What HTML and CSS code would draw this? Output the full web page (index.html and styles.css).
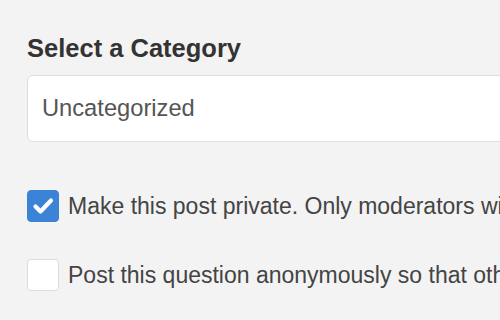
FILE: index.html
```html
<!DOCTYPE html>
<html>
<head>
<meta charset="utf-8">
<link rel="stylesheet" href="styles.css">
</head>
<body>
<div class="form">
  <h2 class="heading">Select a Category</h2>
  <div class="select">Uncategorized</div>
  <div class="options">
    <label class="option">
      <span class="box checked">
        <svg viewBox="0 0 32 32" width="32" height="32"><path d="M8.5 16.5 L13.5 21.5 L24 10.5" fill="none" stroke="#fff" stroke-width="4.2" stroke-linecap="round" stroke-linejoin="round"/></svg>
      </span>
      <span class="text">Make this post private. Only moderators will be able to see it.</span>
    </label>
    <label class="option">
      <span class="box"></span>
      <span class="text">Post this question anonymously so that other users can't see who asked.</span>
    </label>
  </div>
</div>
</body>
</html>
```
FILE: styles.css
```css
html, body {
  margin: 0;
  padding: 0;
  background: #f3f3f3;
  overflow: hidden;
}
body {
  width: 500px;
  height: 320px;
  font-family: "Liberation Sans", Arial, sans-serif;
}
.form {
  width: 700px;
  padding: 33px 0 0 27px;
}
.heading {
  margin: 0;
  font-size: 25.5px;
  line-height: 30px;
  font-weight: bold;
  color: #333;
}
.select {
  margin-top: 12px;
  height: 65px;
  box-sizing: content-box;
  border: 1px solid #dedede;
  border-radius: 6px;
  background: #fff;
  padding: 0 0 0 14px;
  display: flex;
  align-items: center;
  font-size: 23.7px;
  color: #555;
}
.options {
  margin-top: 48px;
  display: flex;
  flex-direction: column;
  gap: 37px;
}
.option {
  display: flex;
  align-items: center;
  gap: 9px;
  white-space: nowrap;
}
.box {
  width: 32px;
  height: 32px;
  box-sizing: border-box;
  border: 1px solid #dcdcdc;
  border-radius: 4px;
  background: #fff;
  flex: none;
  display: flex;
}
.box.checked {
  background: #3b83d6;
  border-color: #3b83d6;
}
.box svg {
  margin: -1px;
}
.text {
  font-size: 23px;
  color: #444;
}
```
